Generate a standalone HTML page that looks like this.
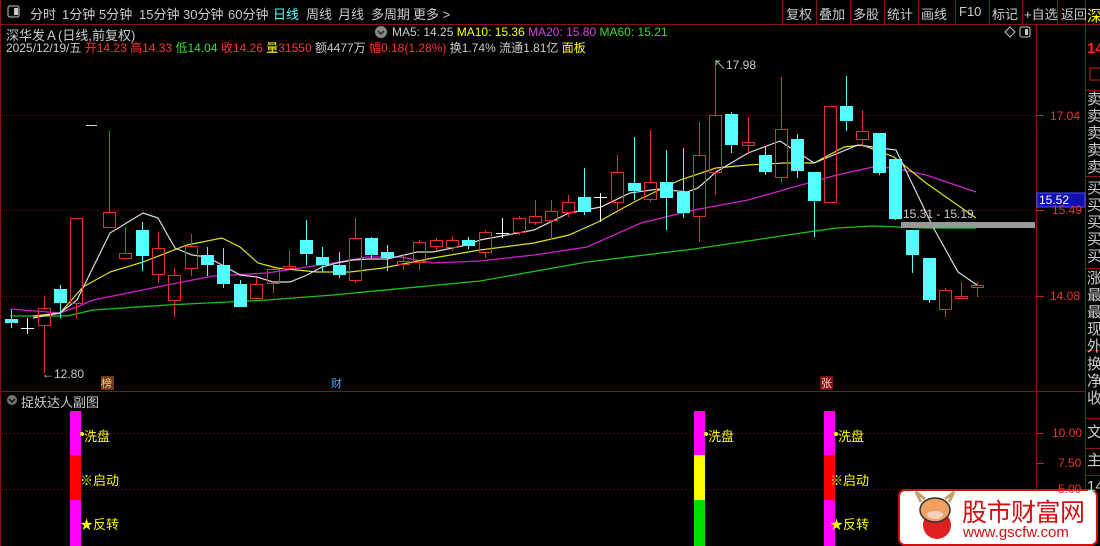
<!DOCTYPE html>
<html><head><meta charset="utf-8"><style>
body{margin:0;width:1100px;height:546px;background:#000;overflow:hidden;position:relative;font-family:"Liberation Sans","Noto Sans CJK SC",sans-serif;}
.a{position:absolute;white-space:nowrap;}
.tb{font-size:13px;color:#ccc;top:4px;}
.rc{position:absolute;left:1087px;font-size:15px;color:#ccc;line-height:17px;}
</style></head><body>
<svg width="1100" height="546" style="position:absolute;left:0;top:0">
<rect x="0" y="0" width="1085" height="24" fill="#000"/>
<line x1="0" y1="24.5" x2="1100" y2="24.5" stroke="#8b1010"/>
<line x1="0.5" y1="0" x2="0.5" y2="546" stroke="#8b1010"/>
<rect x="8" y="6" width="11" height="11" fill="none" stroke="#ccc" rx="2"/><rect x="14" y="8" width="4" height="7" fill="#ccc"/>
<g stroke="#8b1010">
<line x1="782.5" y1="0" x2="782.5" y2="24"/><line x1="816.5" y1="0" x2="816.5" y2="24"/><line x1="850.5" y1="0" x2="850.5" y2="24"/><line x1="884.5" y1="0" x2="884.5" y2="24"/><line x1="918.5" y1="0" x2="918.5" y2="24"/><line x1="955.5" y1="0" x2="955.5" y2="24"/><line x1="989.5" y1="0" x2="989.5" y2="24"/><line x1="1022.5" y1="0" x2="1022.5" y2="24"/><line x1="1057.5" y1="0" x2="1057.5" y2="24"/>
<line x1="1036.5" y1="25" x2="1036.5" y2="546"/><line x1="1085.5" y1="0" x2="1085.5" y2="546"/>
<line x1="0" y1="391.5" x2="1036" y2="391.5"/>
<line x1="1036" y1="391.5" x2="1085" y2="391.5"/>
<line x1="1085" y1="176.5" x2="1100" y2="176.5"/><line x1="1085" y1="268.5" x2="1100" y2="268.5"/><line x1="1085" y1="350.5" x2="1100" y2="350.5"/><line x1="1085" y1="418.5" x2="1100" y2="418.5"/><line x1="1085" y1="448.5" x2="1100" y2="448.5"/><line x1="1085" y1="475.5" x2="1100" y2="475.5"/><line x1="1085" y1="90.5" x2="1100" y2="90.5"/>
</g>
<rect x="1090" y="68" width="12" height="12" fill="none" stroke="#c22"/>
<g stroke="#8b1010" stroke-dasharray="1,3">
<line x1="2" y1="115.5" x2="1036" y2="115.5"/><line x1="2" y1="210.5" x2="1036" y2="210.5"/><line x1="2" y1="296.5" x2="1036" y2="296.5"/>
<line x1="2" y1="433.5" x2="1036" y2="433.5"/><line x1="2" y1="489.5" x2="1036" y2="489.5"/>
</g>
<g stroke="#c22"><line x1="1036" y1="115.5" x2="1044" y2="115.5"/><line x1="1036" y1="210.5" x2="1044" y2="210.5"/><line x1="1036" y1="296.5" x2="1044" y2="296.5"/><line x1="1036" y1="433.5" x2="1044" y2="433.5"/><line x1="1036" y1="463.5" x2="1044" y2="463.5"/><line x1="1036" y1="489.5" x2="1044" y2="489.5"/></g>
<polyline fill="none" stroke="#1fc01f" stroke-width="1.3" points="10,316 67,316 93,310 167,305 267,300 333,295 480,281 587,262 694,249 748,241 801,233 837,228 873,226 900,227 926,228 976,228"/>
<polyline fill="none" stroke="#d020d0" stroke-width="1.3" points="10,309 60,313 77,307 93,300 133,292 167,285 213,276 267,273 333,263 367,257 400,257 433,263 480,261 534,255 587,247 641,223 694,210 748,200 801,185 837,175 873,167 894,168 926,175 976,192"/>
<polyline fill="none" stroke="#e0e020" stroke-width="1.2" points="33,316 60,313 83,287 110,272 143,262 187,245 222,238 240,247 258,263 277,268 317,272 350,272 383,268 433,258 480,250 534,243 569,235 598,222 634,202 680,180 716,168 748,165 784,163 814,163 844,147 862,145 894,157 926,183 976,218"/>
<polyline fill="none" stroke="#ddd" stroke-width="1.2" points="33,318 60,313 77,300 110,233 143,213 158,218 175,248 192,255 207,257 222,265 240,275 257,277 273,282 290,282 307,275 322,267 337,263 353,260 370,259 387,259 417,252 433,252 467,245 480,240 534,230 569,213 601,207 630,193 659,189 687,192 698,188 716,172 748,153 780,141 814,163 858,145 896,150 933,227 958,272 977,285"/>
<g id="c"></g>
<rect x="901" y="222" width="134" height="6" fill="#999"/>
<rect x="70" y="411" width="11" height="44" fill="#f0f"/><rect x="70" y="455" width="11" height="45" fill="#f00"/><rect x="70" y="500" width="11" height="46" fill="#f0f"/>
<rect x="694" y="411" width="11" height="44" fill="#f0f"/><rect x="694" y="455" width="11" height="45" fill="#ff0"/><rect x="694" y="500" width="11" height="46" fill="#0d0"/>
<rect x="824" y="411" width="11" height="44" fill="#f0f"/><rect x="824" y="455" width="11" height="45" fill="#f00"/><rect x="824" y="500" width="11" height="46" fill="#f0f"/>
<circle cx="82" cy="434" r="2" fill="#ff0"/><circle cx="706" cy="434" r="2" fill="#ff0"/><circle cx="836" cy="434" r="2" fill="#ff0"/>
<circle cx="12" cy="400" r="5" fill="#777"/><path d="M9 399 L12 402 L15 399" stroke="#000" fill="none" stroke-width="1.3"/>
<path d="M1010 27 L1015 32 L1010 37 L1005 32Z" fill="none" stroke="#ccc"/>
<rect x="1020" y="27" width="10" height="10" rx="2" fill="none" stroke="#ccc"/><rect x="1025" y="29" width="3" height="6" fill="#ccc"/>
<circle cx="381" cy="32" r="6" fill="#888"/><path d="M378 31 L381 34 L384 31" stroke="#222" fill="none" stroke-width="1.4"/>
<rect x="101" y="376" width="13" height="14" fill="#6b3a1a"/>
<rect x="820" y="376" width="13" height="14" fill="#7a1010"/>
<rect x="1037" y="193" width="48" height="14" fill="#1010b0" stroke="#5050ff"/>
<rect x="899" y="490" width="198" height="55" rx="6" fill="#fff" stroke="#d01010" stroke-width="2"/>
<circle cx="937" cy="525" r="14" fill="#e02020"/>
<ellipse cx="935" cy="510" rx="15" ry="12" fill="#f0a060" stroke="#333" stroke-width="1.5"/>
<ellipse cx="935" cy="515" rx="8" ry="4" fill="#f8d0c0"/>
<path d="M921 502 L916 492 L925 499 M949 502 L954 492 L945 499" stroke="#c8a070" stroke-width="3" fill="none"/>
</svg>
<script>
var C=[[11,0,319,323,310,328],[27,2,328,328,318,334],[44,1,308,325,296,373],[60,0,289,303,285,318],[76,1,218,303,218,318],[92,3,125,125,125,125],[109,1,212,227,131,227],[125,1,253,258,227,260],[142,0,230,256,222,271],[158,1,248,274,232,283],[174,1,275,300,268,317],[191,1,246,268,234,276],[207,0,255,265,247,276],[223,0,265,284,248,288],[240,0,284,307,280,307],[256,1,284,298,278,298],[273,1,269,283,268,293],[289,1,266,268,250,270],[306,0,240,254,220,265],[322,0,257,265,247,272],[339,0,265,275,252,278],[355,1,238,280,218,283],[371,0,238,255,237,258],[387,0,252,258,245,271],[403,1,261,264,254,270],[419,1,242,262,240,270],[436,1,240,246,238,251],[452,1,240,247,236,251],[468,0,240,246,237,249],[485,1,232,252,230,258],[502,2,233,233,218,238],[519,1,218,232,216,235],[535,1,216,222,200,225],[551,1,211,220,200,240],[568,1,202,212,195,217],[584,0,197,212,168,215],[600,2,197,197,193,222],[617,1,172,202,155,210],[634,0,183,191,137,200],[650,1,182,199,130,202],[666,0,182,198,150,230],[683,0,192,213,148,218],[699,1,155,216,122,242],[715,1,115,172,60,195],[731,0,114,145,112,153],[748,1,142,145,117,153],[765,0,155,172,147,175],[781,1,129,177,77,183],[797,0,139,171,134,178],[814,0,172,201,172,237],[830,1,106,202,106,202],[846,0,106,121,76,131],[862,1,131,139,110,147],[879,0,133,173,133,175],[895,0,159,219,159,220],[912,0,230,255,230,273],[929,0,258,300,258,303],[945,1,290,309,288,317],[961,1,296,298,282,298],[977,1,285,287,282,297]];
var s='';C.forEach(function(c){var x=c[0],t=c[1];
if(t==0){s+='<line x1="'+(x+.5)+'" y1="'+c[4]+'" x2="'+(x+.5)+'" y2="'+c[5]+'" stroke="#54ffff"/><rect x="'+(x-6)+'" y="'+c[2]+'" width="13" height="'+Math.max(2,c[3]-c[2])+'" fill="#54ffff"/>';}
else if(t==1){s+='<line x1="'+(x+.5)+'" y1="'+c[4]+'" x2="'+(x+.5)+'" y2="'+c[2]+'" stroke="#e03030"/><line x1="'+(x+.5)+'" y1="'+c[3]+'" x2="'+(x+.5)+'" y2="'+c[5]+'" stroke="#e03030"/><rect x="'+(x-5.5)+'" y="'+(c[2]+.5)+'" width="12" height="'+Math.max(2,c[3]-c[2])+'" fill="none" stroke="#e03030"/>';}
else if(t==2){s+='<line x1="'+(x+.5)+'" y1="'+c[4]+'" x2="'+(x+.5)+'" y2="'+c[5]+'" stroke="#fff"/><line x1="'+(x-6)+'" y1="'+(c[2]+.5)+'" x2="'+(x+7)+'" y2="'+(c[2]+.5)+'" stroke="#fff"/>';}
else{s+='<line x1="'+(x-6)+'" y1="125.5" x2="'+(x+5)+'" y2="125.5" stroke="#ddd"/>';}});
document.getElementById('c').innerHTML=s;
</script>
<div class="a tb" style="left:30px">分时</div><div class="a tb" style="left:62px">1分钟</div><div class="a tb" style="left:99px">5分钟</div><div class="a tb" style="left:139px">15分钟</div><div class="a tb" style="left:183px">30分钟</div><div class="a tb" style="left:228px">60分钟</div><div class="a tb" style="left:273px;color:#5ff">日线</div><div class="a tb" style="left:306px">周线</div><div class="a tb" style="left:338px">月线</div><div class="a tb" style="left:371px">多周期</div><div class="a tb" style="left:413px">更多 &gt;</div>
<div class="a tb" style="left:786px">复权</div><div class="a tb" style="left:819px">叠加</div><div class="a tb" style="left:853px">多股</div><div class="a tb" style="left:887px">统计</div><div class="a tb" style="left:921px">画线</div><div class="a tb" style="left:959px">F10</div><div class="a tb" style="left:992px">标记</div><div class="a tb" style="left:1024px">+自选</div><div class="a tb" style="left:1061px">返回</div>
<div class="a" style="left:6px;top:25px;font-size:13px;color:#ccc">深华发Ａ(日线,前复权)</div>
<div class="a" style="left:392px;top:25px;font-size:12px;color:#ccc">MA5: 14.25 <span style="color:#ff0">MA10: 15.36</span> <span style="color:#e040e0">MA20: 15.80</span> <span style="color:#3d3">MA60: 15.21</span></div>
<div class="a" style="left:6px;top:39px;font-size:12px;color:#ccc">2025/12/19/五 <span style="color:#f33">开14.23 高14.33</span> <span style="color:#3d3">低14.04</span> <span style="color:#f33">收14.26</span> <span style="color:#ff0">量</span><span style="color:#f33">31550</span> 额4477万 <span style="color:#f33">幅0.18(1.28%)</span> 换1.74% 流通1.81亿 <span style="color:#ff0">面板</span></div>
<div class="a" style="left:714px;top:56px;font-size:12px;color:#ccc">↖17.98</div>
<div class="a" style="left:42px;top:367px;font-size:12px;color:#ccc">←12.80</div>
<div class="a" style="left:101px;top:375px;font-size:11px;color:#fc8">榜</div>
<div class="a" style="left:331px;top:375px;font-size:11px;color:#5af">财</div>
<div class="a" style="left:821px;top:375px;font-size:11px;color:#fcc">张</div>
<div class="a" style="left:903px;top:207px;font-size:12px;color:#ccc">15.31 - 15.19</div>
<div class="a" style="left:1050px;top:109px;font-size:12px;color:#e33">17.04</div>
<div class="a" style="left:1052px;top:203px;font-size:12px;color:#e33">15.49</div>
<div class="a" style="left:1039px;top:193px;font-size:12px;color:#fff">15.52</div>
<div class="a" style="left:1050px;top:289px;font-size:12px;color:#e33">14.08</div>
<div class="a" style="left:1052px;top:426px;font-size:12px;color:#e33">10.00</div>
<div class="a" style="left:1058px;top:456px;font-size:12px;color:#e33">7.50</div>
<div class="a" style="left:1058px;top:482px;font-size:12px;color:#e33">5.00</div>
<div class="a" style="left:21px;top:392px;font-size:13px;color:#ccc">捉妖达人副图</div>
<div class="a" style="left:84px;top:426px;font-size:13px;color:#ff0">洗盘</div><div class="a" style="left:708px;top:426px;font-size:13px;color:#ff0">洗盘</div><div class="a" style="left:838px;top:426px;font-size:13px;color:#ff0">洗盘</div>
<div class="a" style="left:80px;top:470px;font-size:13px;color:#ff0">※启动</div><div class="a" style="left:830px;top:470px;font-size:13px;color:#ff0">※启动</div>
<div class="a" style="left:80px;top:514px;font-size:13px;color:#ff0">★反转</div><div class="a" style="left:830px;top:514px;font-size:13px;color:#ff0">★反转</div>
<div class="rc" style="top:8px;color:#ff0">深</div>
<div class="rc" style="top:40px;color:#f22;font-weight:bold">14</div>
<div class="rc" style="top:91px">卖<br>卖<br>卖<br>卖<br>卖</div>
<div class="rc" style="top:180px">买<br>买<br>买<br>买<br>买</div>
<div class="rc" style="top:270px">涨<br>最<br>最<br>现<br>外</div>
<div class="rc" style="top:356px">换<br>净<br>收</div>
<div class="rc" style="top:424px">文</div><div class="rc" style="top:452px">主</div>
<div class="rc" style="top:478px">14</div>
<div class="a" style="left:962px;top:493px;font-size:25px;color:#d01010;letter-spacing:-0.5px">股市财富网</div>
<div class="a" style="left:963px;top:524px;font-size:15px;color:#d01010">www.gscfw.com</div>
</body></html>
